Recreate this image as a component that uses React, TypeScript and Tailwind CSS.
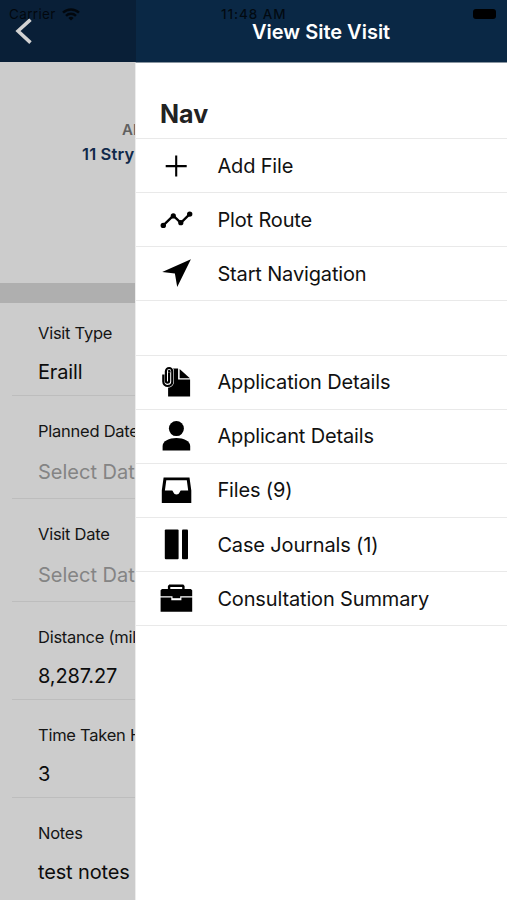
import type { ReactNode } from 'react';
import clsx from 'clsx';

interface NavItem {
  label: string;
  icon: ReactNode;
}

interface Field {
  label: string;
  value: string;
  placeholder?: boolean;
}

const actions: NavItem[] = [
  {
    label: 'Add File',
    icon: <path d="M18.2 7.6v21M7.7 18.1h21" fill="none" stroke="currentColor" strokeWidth={2.1} />,
  },
  {
    label: 'Plot Route',
    icon: (
      <>
        <path d="M5.3 23.4l10-9.7 7.5 7.2 8.9-8.8" fill="none" stroke="currentColor" strokeWidth={2.3} />
        <circle cx="5.3" cy="23.4" r="2.7" />
        <circle cx="15.3" cy="13.9" r="2.6" />
        <circle cx="22.8" cy="20.7" r="2.6" />
        <circle cx="31.7" cy="12.1" r="2.7" />
      </>
    ),
  },
  {
    label: 'Start Navigation',
    icon: <path d="M32.9 3.3L4.2 16l12.7 1.6L19.2 31z" />,
  },
];

const records: NavItem[] = [
  {
    label: 'Application Details',
    icon: (
      <>
        <path d="M10.1 4.6h10v10.8h12v17.1h-22z" />
        <path d="M21.6 5l10.3 9.3H21.6z" />
        <path d="M5.3 10.5v7a4.5 4.5 0 0 0 9 0V7.2a3.2 3.2 0 0 0-6.4 0V17a1.6 1.6 0 0 0 3.2 0V8.5" fill="none" stroke="white" strokeWidth={3.4} />
        <path d="M5.3 10.5v7a4.5 4.5 0 0 0 9 0V7.2a3.2 3.2 0 0 0-6.4 0V17a1.6 1.6 0 0 0 3.2 0V8.5" fill="none" stroke="currentColor" strokeWidth={2.2} />
      </>
    ),
  },
  {
    label: 'Applicant Details',
    icon: (
      <>
        <circle cx="18.4" cy="10.6" r="7.5" />
        <path d="M4.6 32.4v-4.5c0-4.8 6.5-7.9 13.8-7.9s13.8 3.1 13.8 7.9v4.5z" />
      </>
    ),
  },
  {
    label: 'Files (9)',
    icon: (
      <path
        fillRule="evenodd"
        d="M5.6 5.5h25.9l1.8 13V31H3.8V18.5zM8.3 8.3L6.9 18.5h6.7c1 0 1.3.7 1.6 1.4.7 1.7 1.8 2.5 3.3 2.5s2.6-.8 3.3-2.5c.3-.7.6-1.4 1.6-1.4h6.8L28.8 8.3z"
      />
    ),
  },
  {
    label: 'Case Journals (1)',
    icon: (
      <>
        <rect x="6.8" y="2.6" width="13.8" height="29.6" rx="1" />
        <rect x="24" y="2.6" width="6" height="29.6" rx="1" />
      </>
    ),
  },
  {
    label: 'Consultation Summary',
    icon: (
      <>
        <path fillRule="evenodd" d="M9.9 8V5l1.3-1.4h14.1L26.6 5v3h6.2l1.4 1.3v5.9H2.6V9.3L4 8zm2.4 0h11.9V6H12.3z" />
        <path d="M2.6 16.6h10.7v2.6h10.1v-2.6h10.8v14.1H2.6z" />
        <path d="M14.5 15h7.7v2.2h-7.7z" />
      </>
    ),
  },
];

const fields: Field[] = [
  { label: 'Visit Type', value: 'Eraill' },
  { label: 'Planned Date', value: 'Select Date', placeholder: true },
  { label: 'Visit Date', value: 'Select Date', placeholder: true },
  { label: 'Distance (miles)', value: '8,287.27' },
  { label: 'Time Taken Hours', value: '3' },
  { label: 'Notes', value: 'test notes' },
];

function NavRow({ label, icon }: NavItem) {
  return (
    <li className="flex h-[54.15px] items-center border-b border-[#e9e9e9] pl-[21.6px]">
      <svg className="mr-[23.8px] size-9 shrink-0" viewBox="0 0 36 36" fill="currentColor" aria-hidden="true">
        {icon}
      </svg>
      <span className="text-[20px] tracking-[-0.15px] whitespace-nowrap text-[#111111]">{label}</span>
    </li>
  );
}

function FieldRow({ label, value, placeholder }: Field) {
  return (
    <div
      className={clsx(
        'ml-3 shrink-0 border-b border-[#bdbdbd] pt-[22.5px] pl-[26px] whitespace-nowrap last:border-b-0',
        placeholder ? 'h-[103px]' : 'h-[98px]',
      )}
    >
      <div className="text-[16.5px] leading-6 tracking-[-0.25px] text-[#151515]">{label}</div>
      <div
        className={clsx(
          'text-[20px] leading-6',
          placeholder ? 'mt-[17.5px] text-[#848484]' : 'mt-[15px] tracking-[-0.15px] text-[#0c0c0c]',
        )}
      >
        {value}
      </div>
    </div>
  );
}

export default function App() {
  return (
    <div className="flex h-[900px] w-[507px] flex-col overflow-hidden bg-white font-['Inter',sans-serif]">
      <header className="relative flex h-[62px] shrink-0 bg-[#0a2845]">
        {/* Status bar sits over the navigation bar */}
        <div className="absolute inset-x-0 top-[5px] z-10 flex h-[18px] items-center text-[13.5px] text-black/75">
          <span className="w-[52px] pl-[9px] tracking-[0.35px]">Carrier</span>
          <svg className="ml-[10px] h-[13px] w-[18px]" viewBox="0 0 18 13" fill="none" stroke="currentColor" aria-hidden="true">
            <path d="M1 4.7a11.5 11.5 0 0 1 16 0M4 7.8a7.2 7.2 0 0 1 10 0" strokeWidth={2.5} />
            <path d="M9 12.6L6.3 10a4 4 0 0 1 5.4 0z" fill="currentColor" stroke="none" />
          </svg>
          <span className="ml-[141px] text-[13.5px] font-medium tracking-[0.9px]">11:48 AM</span>
          <span className="mr-[11px] ml-auto h-[10px] w-[23px] rounded-[3px] bg-black" />
        </div>
        <div className="flex w-[135.5px] shrink-0 items-center bg-[#091f37] pl-[15px]">
          <svg className="h-[28px] w-[18px]" viewBox="0 0 18 28" fill="none" stroke="#d2d2d2" strokeWidth={3.5} aria-hidden="true">
            <path d="M15.5 2.6L3 14l12.5 11.6" />
          </svg>
        </div>
        <h1 className="flex-1 pt-[18px] pl-[116.5px] text-[20px] leading-7 font-semibold whitespace-nowrap text-white">
          View Site Visit
        </h1>
      </header>

      <div className="flex min-h-0 flex-1">
        {/* Dimmed page behind the drawer */}
        <main className="flex w-[135px] shrink-0 flex-col overflow-hidden bg-[#cccccc]">
          <div className="h-[221px] shrink-0 pt-[56px] whitespace-nowrap">
            <div className="pl-[122px] text-[15px] leading-6 font-semibold text-[#606060]">APP</div>
            <div className="pl-[82px] text-[16.5px] leading-6 font-semibold tracking-[0.15px] text-[#10294a]">11 Stry</div>
          </div>
          <div className="h-[20px] shrink-0 bg-[#afafaf]" />
          <div className="-mt-[5px] flex flex-col">
            {fields.map((field) => (
              <FieldRow key={field.label} {...field} />
            ))}
          </div>
        </main>

        <nav className="flex-1 border-t border-t-[#8995a0] border-l border-l-[#ececec] bg-white">
          <h2 className="h-[76px] border-b border-[#e9e9e9] pt-[35px] pl-[24px] text-[25px] leading-8 font-bold text-[#222222]">
            Nav
          </h2>
          <ul>
            {actions.map((item) => (
              <NavRow key={item.label} {...item} />
            ))}
            <li className="h-[54.15px] border-b border-[#e9e9e9]" />
            {records.map((item) => (
              <NavRow key={item.label} {...item} />
            ))}
          </ul>
        </nav>
      </div>
    </div>
  );
}
